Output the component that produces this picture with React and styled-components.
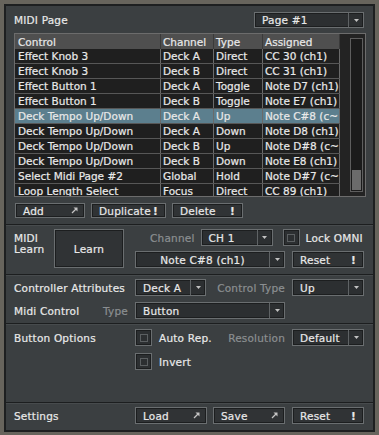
import React from 'react';
import styled, { createGlobalStyle } from 'styled-components';

const GlobalStyle = createGlobalStyle`
  html, body {
    margin: 0;
    padding: 0;
    background: #67645c;
  }
  body {
    font-family: 'DejaVu Sans', 'Liberation Sans', sans-serif;
  }
`;

const Frame = styled.div`
  width: 379px;
  height: 435px;
  box-sizing: border-box;
  padding: 4px 4px 3px 4px;
  background: #67645c;
`;

const Panel = styled.div`
  height: 100%;
  box-sizing: border-box;
  border: 2px solid #1d1f20;
  background: #3b3f41;
  display: flex;
  flex-direction: column;
  color: #e9e9e9;
  font-size: 10.5px;
  letter-spacing: 0.2px;
  -webkit-text-stroke: 0.2px currentColor;
`;

const TopSection = styled.div`
  height: 218px;
  box-sizing: border-box;
  padding: 6px 7px 0 8px;
  display: flex;
  flex-direction: column;
`;

const Header = styled.div`
  height: 16px;
  display: flex;
  align-items: center;
  justify-content: space-between;
  padding-right: 2px;
`;

const Separator = styled.div`
  height: 2px;
  box-sizing: border-box;
  border-top: 1px solid #1c1e1f;
  border-bottom: 1px solid #474b4d;
`;

/* table */

const Table = styled.div`
  margin-top: 5px;
  height: 164px;
  box-sizing: border-box;
  border: 1px solid #6c6c6c;
  background: #232323;
  display: flex;
  overflow: hidden;
  letter-spacing: 0;
`;

const Rows = styled.div`
  width: 325px;
  display: flex;
  flex-direction: column;
`;

const Row = styled.div`
  flex: none;
  display: flex;
  height: 15px;
  box-sizing: border-box;
  background: ${p => (p.$head ? '#4f4f4f' : p.$sel ? '#5c7f8e' : '#1f1f1f')};
  border-bottom: ${p => (p.$head ? 'none' : '1px solid #575757')};
`;

const Cell = styled.div`
  box-sizing: border-box;
  width: ${p => p.$w}px;
  padding-left: ${p => (p.$first ? 3 : 2)}px;
  border-right: 1px solid ${p => (p.$head ? '#3a3a3a' : '#6a6a6a')};
  line-height: ${p => (p.$head ? 16 : 14)}px;
  white-space: nowrap;
  overflow: hidden;
`;

const ScrollCol = styled.div`
  flex: 1;
  display: flex;
  justify-content: flex-end;
  padding: 4px 2px 4px 0;
`;

const Track = styled.div`
  width: 13px;
  box-sizing: border-box;
  border: 1px solid #5e5e5e;
  background: #1b1b1b;
  display: flex;
  flex-direction: column;
  justify-content: flex-end;
  padding: 1px;
`;

const Thumb = styled.div`
  height: 20px;
  background: #6b6b6b;
`;

/* controls */

const ButtonBar = styled.div`
  margin: 6px 0 0 1px;
  display: flex;
  gap: 6px;
`;

const Button = styled.div`
  box-sizing: border-box;
  width: ${p => (p.$w ? `${p.$w}px` : '100%')};
  height: ${p => p.$h || 17}px;
  display: flex;
  align-items: center;
  justify-content: ${p => (p.$center ? 'center' : 'space-between')};
  padding: ${p => (p.$center ? '0' : '0 6px 0 7px')};
  border: 1px solid #6a6e70;
  box-shadow: inset 0 0 0 1px #1c1e1f;
  background: #303335;
  white-space: nowrap;
`;

const Bang = styled.span`
  font-weight: bold;
  padding-right: 1px;
`;

const Dropdown = styled.div`
  box-sizing: border-box;
  width: ${p => (p.$w ? `${p.$w}px` : '100%')};
  height: ${p => p.$h || 17}px;
  display: flex;
  border: 1px solid #6a6e70;
  box-shadow: inset 0 0 0 1px #1c1e1f;
  background: #2c2f31;
`;

const DropValue = styled.span`
  flex: 1;
  display: flex;
  align-items: center;
  justify-content: ${p => (p.$center ? 'center' : 'flex-start')};
  padding-left: ${p => (p.$center ? 0 : 7)}px;
  white-space: nowrap;
`;

const DropArrow = styled.span`
  width: 14px;
  border-left: 1px solid #5f6365;
  display: flex;
  align-items: center;
  justify-content: center;
`;

const Check = styled.div`
  flex: none;
  box-sizing: border-box;
  width: 17px;
  height: 17px;
  border: 1px solid #6a6e70;
  box-shadow: inset 0 0 0 1px #1c1e1f;
  background: #2c2f31;
  display: flex;
  align-items: center;
  justify-content: center;
`;

const CheckInner = styled.div`
  width: 8px;
  height: 8px;
  box-sizing: border-box;
  border: 1px solid #5b5f61;
`;

/* settings sections */

const Section = styled.div`
  height: ${p => p.$h}px;
  box-sizing: border-box;
  padding: ${p => p.$pt}px 9px 0 8px;
  display: grid;
  grid-template-columns: 114px 150px 72px;
  grid-auto-rows: 17px;
  column-gap: 7px;
  row-gap: ${p => p.$gap}px;
  align-content: start;
`;

const Label = styled.div`
  display: flex;
  align-items: center;
  justify-content: ${p => (p.$split ? 'space-between' : 'flex-start')};
  white-space: nowrap;
`;

const Muted = styled.span`
  color: #8b8f91;
  -webkit-text-stroke: 0.2px #8b8f91;
  white-space: nowrap;
`;

const LearnCell = styled.div`
  grid-row: span 2;
  display: flex;
  align-items: flex-start;
`;

const LearnLabel = styled.div`
  width: 40px;
  margin-top: 4px;
  line-height: 11px;
`;

const Line = styled.div`
  grid-column: ${p => p.$span || 'auto'};
  display: flex;
  align-items: center;
  gap: ${p => p.$gap || 0}px;
  padding-left: ${p => p.$indent || 0}px;
  justify-content: ${p => (p.$split ? 'space-between' : 'flex-start')};
`;

const Text = styled.span`
  margin-left: ${p => p.$ml || 0}px;
  white-space: nowrap;
`;

const Arrow = () => (
  <svg width="5" height="3" viewBox="0 0 5 3">
    <polygon points="0,0 5,0 2.5,3" fill="#c2c2c2" />
  </svg>
);

const Jump = () => (
  <svg width="7" height="7" viewBox="0 0 7 7">
    <polygon points="2.5,0.5 6.5,0.5 6.5,4.5" fill="#c4c4c4" />
    <line x1="1" y1="6" x2="5" y2="2" stroke="#c4c4c4" strokeWidth="1.3" />
  </svg>
);

const Select = ({ value, w, h, center }) => (
  <Dropdown $w={w} $h={h}>
    <DropValue $center={center}>{value}</DropValue>
    <DropArrow>
      <Arrow />
    </DropArrow>
  </Dropdown>
);

const Checkbox = () => (
  <Check>
    <CheckInner />
  </Check>
);

const columns = [
  { key: 'control', title: 'Control', w: 146 },
  { key: 'channel', title: 'Channel', w: 53 },
  { key: 'type', title: 'Type', w: 49 },
  { key: 'assigned', title: 'Assigned', w: 77 },
];

const mappings = [
  { control: 'Effect Knob 3', channel: 'Deck A', type: 'Direct', assigned: 'CC 30 (ch1)' },
  { control: 'Effect Knob 3', channel: 'Deck B', type: 'Direct', assigned: 'CC 31 (ch1)' },
  { control: 'Effect Button 1', channel: 'Deck A', type: 'Toggle', assigned: 'Note D7 (ch1)' },
  { control: 'Effect Button 1', channel: 'Deck B', type: 'Toggle', assigned: 'Note E7 (ch1)' },
  { control: 'Deck Tempo Up/Down', channel: 'Deck A', type: 'Up', assigned: 'Note C#8 (c~', selected: true },
  { control: 'Deck Tempo Up/Down', channel: 'Deck A', type: 'Down', assigned: 'Note D8 (ch1)' },
  { control: 'Deck Tempo Up/Down', channel: 'Deck B', type: 'Up', assigned: 'Note D#8 (c~' },
  { control: 'Deck Tempo Up/Down', channel: 'Deck B', type: 'Down', assigned: 'Note E8 (ch1)' },
  { control: 'Select Midi Page #2', channel: 'Global', type: 'Hold', assigned: 'Note D#7 (c~' },
  { control: 'Loop Length Select', channel: 'Focus', type: 'Direct', assigned: 'CC 89 (ch1)' },
];

export default function App() {
  return (
    <Frame>
      <GlobalStyle />
      <Panel>
        <TopSection>
          <Header>
            <span>MIDI Page</span>
            <Select value="Page #1" w={110} h={16} />
          </Header>

          <Table>
            <Rows>
              <Row $head>
                {columns.map((c, ci) => (
                  <Cell key={c.key} $w={c.w} $first={ci === 0} $head>
                    {c.title}
                  </Cell>
                ))}
              </Row>
              {mappings.map((m, i) => (
                <Row key={i} $sel={m.selected}>
                  {columns.map((c, ci) => (
                    <Cell key={c.key} $w={c.w} $first={ci === 0}>
                      {m[c.key]}
                    </Cell>
                  ))}
                </Row>
              ))}
            </Rows>
            <ScrollCol>
              <Track>
                <Thumb />
              </Track>
            </ScrollCol>
          </Table>

          <ButtonBar>
            <Button $w={70} $h={15}>
              Add <Jump />
            </Button>
            <Button $w={75} $h={15}>
              Duplicate <Bang>!</Bang>
            </Button>
            <Button $w={71} $h={15}>
              Delete <Bang>!</Bang>
            </Button>
          </ButtonBar>
        </TopSection>

        <Separator />

        <Section $h={48} $pt={3} $gap={5}>
          <LearnCell>
            <LearnLabel>
              MIDI
              <br />
              Learn
            </LearnLabel>
            <Button $w={70} $h={39} $center>
              Learn
            </Button>
          </LearnCell>
          <Line $span="span 2" $indent={15}>
            <Muted>Channel</Muted>
            <Text $ml={6} />
            <Select value="CH 1" w={72} />
            <Text $ml={10} />
            <Checkbox />
            <Text $ml={6}>Lock OMNI</Text>
          </Line>
          <Select value="Note C#8 (ch1)" center />
          <Button>
            Reset <Bang>!</Bang>
          </Button>
        </Section>

        <Separator />

        <Section $h={47} $pt={3} $gap={6}>
          <Label>Controller Attributes</Label>
          <Line $split>
            <Select value="Deck A" w={71} />
            <Muted>Control Type</Muted>
          </Line>
          <Select value="Up" />
          <Label $split>
            <span>Midi Control</span>
            <Muted>Type</Muted>
          </Label>
          <Select value="Button" />
        </Section>

        <Separator />

        <Section $h={77} $pt={4} $gap={7}>
          <Label>Button Options</Label>
          <Line>
            <Checkbox />
            <Text $ml={7}>Auto Rep.</Text>
            <Muted style={{ marginLeft: 'auto' }}>Resolution</Muted>
          </Line>
          <Select value="Default" />
          <div />
          <Line>
            <Checkbox />
            <Text $ml={7}>Invert</Text>
          </Line>
        </Section>

        <Separator />

        <Section $h={26} $pt={3} $gap={0}>
          <Label>Settings</Label>
          <Line $gap={6}>
            <Button $w={72}>
              Load <Jump />
            </Button>
            <Button $w={72}>
              Save <Jump />
            </Button>
          </Line>
          <Button>
            Reset <Bang>!</Bang>
          </Button>
        </Section>
      </Panel>
    </Frame>
  );
}
